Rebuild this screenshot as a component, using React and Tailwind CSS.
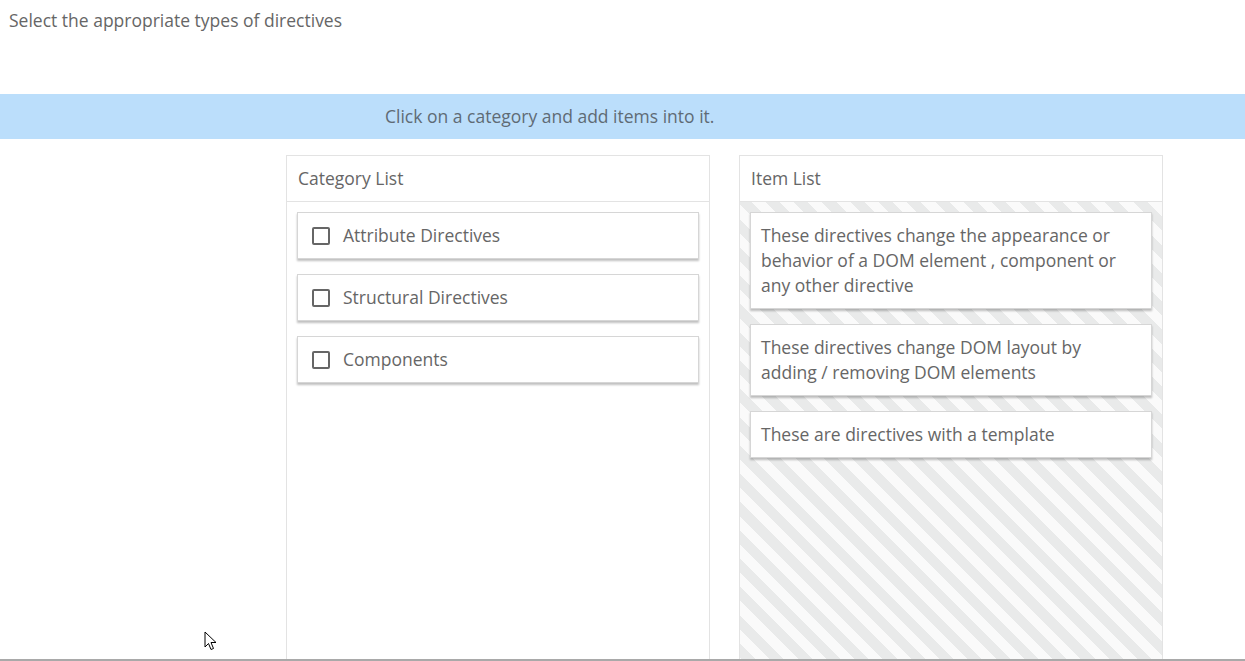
import React from 'react';

const categories = ['Attribute Directives', 'Structural Directives', 'Components'];

const items = [
  'These directives change the appearance or behavior of a DOM element , component or any other directive',
  'These directives change DOM layout by adding / removing DOM elements',
  'These are directives with a template',
];

const stripes = {
  backgroundImage:
    'repeating-linear-gradient(45deg, #fafafa 0px, #fafafa 10px, #e9eaea 10px, #e9eaea 20px)',
};

export default function App() {
  return (
    <div className="relative h-[661px] overflow-hidden border-b-2 border-[#a9a9a9] bg-white font-['Open_Sans',sans-serif] text-[17.5px] text-[#666]">
      <p className="pl-[9px] pt-[8px] leading-[24px]">Select the appropriate types of directives</p>

      <div className="mt-[62px] flex h-[45px] items-center bg-[#bbdefb] pl-[385px] text-[#5f6b75]">
        Click on a category and add items into it.
      </div>

      <div className="mt-[16px] flex h-full gap-[29px] pl-[286px]">
        {/* category list */}
        <div className="flex w-[424px] flex-col border border-[#e3e3e3]">
          <div className="flex h-[46px] items-center border-b border-[#e3e3e3] pl-[11px]">Category List</div>
          <div className="flex flex-col gap-[15px] px-[10px] pt-[10px]">
            {categories.map((c) => (
              <div key={c} className="flex h-[47px] items-center gap-[13px] border border-[#d6d6d6] bg-white pl-[14px] shadow-[0_2px_2px_rgba(0,0,0,0.25)]">
                <span className="h-[18px] w-[18px] rounded-[2px] border-2 border-[#666]" />
                {c}
              </div>
            ))}
          </div>
        </div>

        {/* item list */}
        <div className="flex w-[424px] flex-col border border-[#e3e3e3]">
          <div className="flex h-[46px] items-center border-b border-[#e3e3e3] bg-white pl-[11px]">Item List</div>
          <div className="flex flex-1 flex-col gap-[15px] px-[10px] pt-[10px]" style={stripes}>
            {items.map((t) => (
              <div key={t} className="border border-[#d6d6d6] bg-white px-[10px] py-[10px] leading-[25px] shadow-[0_2px_2px_rgba(0,0,0,0.25)]">
                {t}
              </div>
            ))}
          </div>
        </div>
      </div>

      {/* mouse pointer */}
      <svg className="absolute left-[204px] top-[631px]" width="14" height="21" viewBox="0 0 14 21">
        <path d="M1 1 L1 16 L4.5 12.5 L7 18.5 L9.5 17.5 L7 11.5 L12 11.5 Z" fill="#fff" stroke="#000" strokeWidth="1" strokeLinejoin="round" />
      </svg>
    </div>
  );
}
